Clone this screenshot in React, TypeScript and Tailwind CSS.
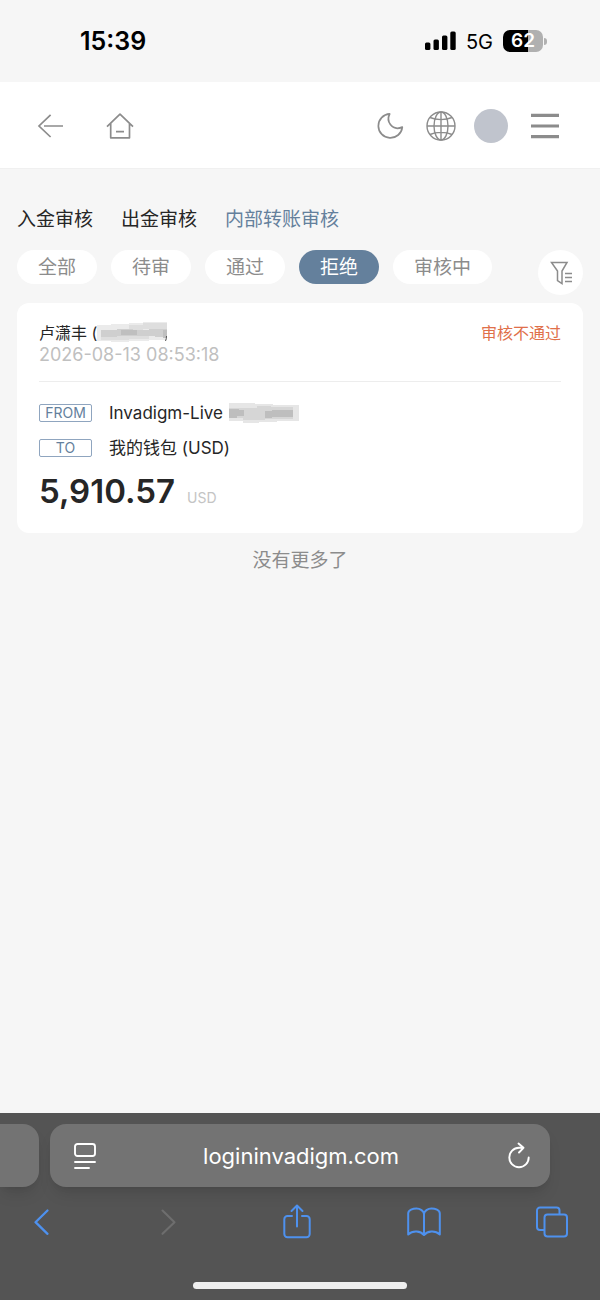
import { ReactNode, useState } from "react";
import clsx from "clsx";

const tabs = ["入金审核", "出金审核", "内部转账审核"];
const filters = ["全部", "待审", "通过", "拒绝", "审核中"];

function StatusBar() {
    return (
        <div className="flex h-[82px] items-center justify-between pl-20 pr-[53px]">
            <span className="pt-px text-[25px] font-semibold text-black">15:39</span>
            <div className="flex items-center gap-2.5 text-black">
                <svg width="31" height="20" viewBox="0 0 31 20" fill="currentColor" aria-hidden="true">
                    <rect x="0" y="11.5" width="5.4" height="7.5" rx="1.5" />
                    <rect x="8.5" y="8.5" width="5.4" height="10.5" rx="1.5" />
                    <rect x="17" y="4.5" width="5.4" height="14.5" rx="1.5" />
                    <rect x="25.3" y="0.5" width="5.4" height="18.5" rx="1.5" />
                </svg>
                <span className="pt-px text-xl">5G</span>
                <div className="flex items-center gap-px">
                    <div className="flex h-[22px] w-10 items-center justify-center rounded-[7px] bg-linear-to-r from-black from-62% to-[#b0b0b0] to-62% text-[19px] font-semibold text-white">
                        62
                    </div>
                    <span className="h-[7px] w-[3px] rounded-r-full bg-[#b0b0b0]" />
                </div>
            </div>
        </div>
    );
}

function Header() {
    return (
        <header className="flex h-[87px] items-center justify-between border-b border-[#f0f0f0] bg-white pt-px pl-[37px] pr-10 text-[#8c8c8c]">
            <div className="flex items-center gap-[42px]">
                <button aria-label="返回">
                    <svg width="27" height="26" viewBox="0 0 27 26" fill="none" stroke="currentColor" strokeWidth="1.7">
                        <path d="M13.6 1.8 2 13l11.6 11M7 13h19" />
                    </svg>
                </button>
                <a href="#home" aria-label="首页">
                    <svg width="28" height="28" viewBox="0 0 28 28" fill="none" stroke="currentColor" strokeWidth="1.7">
                        <path d="M1 14.6 14 2.2l13 12.4M4.7 11.5v14.3h18.8V11.5M10 19.6h8" strokeLinejoin="round" />
                    </svg>
                </a>
            </div>
            <div className="flex items-center gap-[22px]">
                <button aria-label="深色模式">
                    <svg width="28" height="28" viewBox="0 0 28 28" fill="none" stroke="currentColor" strokeWidth="1.7" strokeLinejoin="round">
                        <path d="M13.7 1.9A12 12 0 1 0 26.3 15.100C21.500 17.200 17 16 14.400 12.600 12 9.500 11.900 5.500 13.700 1.900Z" />
                    </svg>
                </button>
                <button aria-label="语言">
                    <svg width="30" height="30" viewBox="0 0 30 30" fill="none" stroke="currentColor" strokeWidth="1.4">
                        <circle cx="15" cy="15" r="14" />
                        <ellipse cx="15" cy="15" rx="7" ry="14" />
                        <path d="M15 1v28M1 15h28M4 6.5c6 2.8 16 2.8 22 0M4 23.5c6-2.8 16-2.8 22 0" />
                    </svg>
                </button>
                <button aria-label="账户" className="-ml-1 size-[34px] rounded-full bg-[#c0c4cd]" />
                <button aria-label="菜单">
                    <svg width="30" height="26" viewBox="0 0 30 26" fill="none" stroke="currentColor" strokeWidth="3.2">
                        <path d="M1 2.4h28M1 13h28M1 23.6h28" />
                    </svg>
                </button>
            </div>
        </header>
    );
}

function NameMask() {
    return (
        <svg width="71" height="22" viewBox="0 0 71 22" aria-hidden="true">
            <path d="M0 3h14V2h18V1h14V0h24v18H52v1H32v1H14v-1H0Z" fill="#ebebeb" />
            <path d="M32 3h14V1h24v6H46v1H32ZM4 14h28v-1h20v4H32v1H4Z" fill="#dedede" />
            <path d="M4 8h16V7h16v1h16V7h18v8H58v-1H20v1H4Z" fill="#cfcfcf" />
            <path d="M24 8h16v5H24zM66 8h4v8h-4z" fill="#bfbfbf" />
            <path d="M69.5 14c0 2-.3 3.500-1 5" stroke="#555" fill="none" />
        </svg>
    );
}

function AccountMask() {
    return (
        <svg width="70" height="22" viewBox="0 0 70 22" aria-hidden="true">
            <path d="M0 1h26v1h18v1h26v16H48v1H30v1H14v-2H0Z" fill="#e6e6e6" />
            <path d="M0 6h28V4h14v1h22v12H36v1H14v-2H0Z" fill="#d6d6d6" />
            <path d="M0 7h10v1h5v6H8v2H0zM36 9h7V8h21v7H43v1h-7z" fill="#bebebe" />
        </svg>
    );
}

function Transfer({ label, children }: { label: string; children: ReactNode }) {
    return (
        <div className="flex items-center gap-[17px]">
            <span className="flex h-[18px] w-[53px] items-center justify-center rounded-xs border border-[#8fa5bf] text-sm text-[#64809c]">
                {label}
            </span>
            <span className="flex items-center gap-1.5 text-[17px] leading-6">{children}</span>
        </div>
    );
}

function RecordCard() {
    return (
        <article className="rounded-xl bg-white px-[22px] pt-[19px] pb-5 text-[#262626]">
            <div className="border-b border-[#ededed] pb-[15px]">
                <div className="flex h-[22px] items-center justify-between text-base">
                    <span className="flex items-center">
                        卢潇丰 (<NameMask />
                    </span>
                    <span className="text-[#e0704a]">审核不通过</span>
                </div>
                <time className="block text-lg leading-[22px] text-[#c0c0c0]">2026-08-13 08:53:18</time>
            </div>
            <div className="flex flex-col gap-[11px] pt-[19px]">
                <Transfer label="FROM">
                    Invadigm-Live <AccountMask />
                </Transfer>
                <Transfer label="TO">我的钱包 (USD)</Transfer>
            </div>
            <p className="mt-[9px] flex items-baseline gap-3">
                <strong className="text-[33px] leading-[44px] font-semibold">5,910.57</strong>
                <span className="text-sm text-[#c4c4c4]">USD</span>
            </p>
        </article>
    );
}

function BrowserBar() {
    return (
        <footer className="bg-[#545454] pt-[11px] pb-[11px]">
            <div className="flex h-[63px] gap-[11px] pr-[50px]">
                <div className="w-[39px] rounded-r-2xl bg-[#737373] shadow-lg" />
                <div className="flex flex-1 items-center justify-between rounded-2xl bg-[#737373] pl-6 pr-[18px] text-white shadow-lg">
                    <button aria-label="页面菜单">
                        <svg width="22" height="26" viewBox="0 0 22 26" fill="none" stroke="currentColor" strokeWidth="1.9" strokeLinecap="round">
                            <rect x="1" y="1" width="20" height="12" rx="2.5" />
                            <path d="M1 19h20M1 25h14" />
                        </svg>
                    </button>
                    <span className="pt-px text-[22px]">logininvadigm.com</span>
                    <button aria-label="刷新">
                        <svg width="26" height="28" viewBox="0 0 26 28" fill="none" stroke="currentColor" strokeWidth="1.9" strokeLinecap="round" strokeLinejoin="round">
                            <path d="M22.7 15.5a9.7 9.7 0 1 1-9.7-9.7h4.5M12.5 1.5 17.5 5.8 13 10.5" />
                        </svg>
                    </button>
                </div>
            </div>
            <nav className="mt-[17px] flex h-9 items-center justify-between pl-6 pr-[31px] text-[#4e91ee]">
                <button aria-label="后退" className="flex w-[34px] justify-center">
                    <svg width="17" height="28" viewBox="0 0 17 28" fill="none" stroke="currentColor" strokeWidth="2.3" strokeLinecap="round" strokeLinejoin="round">
                        <path d="M14.5 2.5 2.5 14.2l12 11.6" />
                    </svg>
                </button>
                <button aria-label="前进" className="flex w-[34px] justify-center text-[#6e6e6e]" disabled>
                    <svg width="17" height="28" viewBox="0 0 17 28" fill="none" stroke="currentColor" strokeWidth="2.1" strokeLinecap="round" strokeLinejoin="round">
                        <path d="m2.5 2.5 12 11.7-12 11.6" />
                    </svg>
                </button>
                <button aria-label="分享" className="flex w-[34px] justify-center">
                    <svg width="28" height="36" viewBox="0 0 28 36" fill="none" stroke="currentColor" strokeWidth="2" strokeLinecap="round" strokeLinejoin="round">
                        <path d="M9 12H4.5A3.2 3.2 0 0 0 1.3 15.2V30a3.2 3.2 0 0 0 3.2 3.2h19a3.2 3.2 0 0 0 3.2-3.2V15.2A3.2 3.2 0 0 0 23.5 12H19M14 22.5V2.5M8.5 7 14 1.500l5.500 5.500" />
                    </svg>
                </button>
                <button aria-label="书签" className="flex w-[34px] justify-center">
                    <svg width="34" height="30" viewBox="0 0 34 30" fill="none" stroke="currentColor" strokeWidth="2" strokeLinejoin="round">
                        <path d="M17 28C13.500 24 6 23 1.200 27.500V6.500C1.200 3 6 1.500 9.500 1.500S17 4 17 7c0-3 4-5.500 7.500-5.500S32.800 3 32.800 6.500V27.500C28 23 20.500 24 17 28ZM17 7v21" />
                    </svg>
                </button>
                <button aria-label="标签页" className="flex w-[34px] justify-center">
                    <svg width="32" height="32" viewBox="0 0 32 32" fill="none" stroke="currentColor" strokeWidth="2">
                        <rect x="8.5" y="8.5" width="22.5" height="22" rx="3" />
                        <path d="M8.5 24H4a3 3 0 0 1-3-3V4.500a3 3 0 0 1 3-3h16.500a3 3 0 0 1 3 3v4" />
                    </svg>
                </button>
            </nav>
            <div className="mx-auto mt-[42px] h-[7px] w-[214px] rounded-full bg-[#efefef]" />
        </footer>
    );
}

export default function App() {
    const [tab, setTab] = useState("内部转账审核");
    const [filter, setFilter] = useState("拒绝");

    return (
        <div className="flex min-h-screen flex-col bg-[#f6f6f6] font-['Inter','Noto_Sans_CJK_SC',sans-serif]">
            <StatusBar />
            <Header />
            <main className="flex-1 px-[17px] pt-[38px]">
                <div className="flex gap-7">
                    {tabs.map((name) => (
                        <button
                            key={name}
                            onClick={() => setTab(name)}
                            className={clsx("text-[19px] leading-[26px]", tab === name ? "text-[#64809c]" : "text-[#262626]")}
                        >
                            {name}
                        </button>
                    ))}
                </div>
                <div className="mt-[17px] flex items-start justify-between">
                    <div className="flex gap-3.5">
                        {filters.map((name) => (
                            <button
                                key={name}
                                onClick={() => setFilter(name)}
                                className={clsx(
                                    "h-[34px] rounded-full px-[21px] pt-0.5 text-[19px] leading-8",
                                    filter === name ? "bg-[#64809c] text-white" : "bg-white text-[#8c8c8c]"
                                )}
                            >
                                {name}
                            </button>
                        ))}
                    </div>
                    <button aria-label="筛选" className="flex size-[45px] items-center justify-center rounded-full bg-white pl-0.5 text-[#8c8c8c]">
                        <svg width="23" height="24" viewBox="0 0 23 24" fill="none" stroke="currentColor" strokeWidth="1.5">
                            <path d="M1.500 1.500h15.500l-5 8.500v12.500l-4.500-3V10ZM15 12.500h7M15 16.500h7M15 20.500h7" />
                        </svg>
                    </button>
                </div>
                <div className="mt-2">
                    <RecordCard />
                </div>
                <p className="mt-3.5 text-center text-[19px] leading-7 text-[#8c8c8c]">没有更多了</p>
            </main>
            <BrowserBar />
        </div>
    );
}
